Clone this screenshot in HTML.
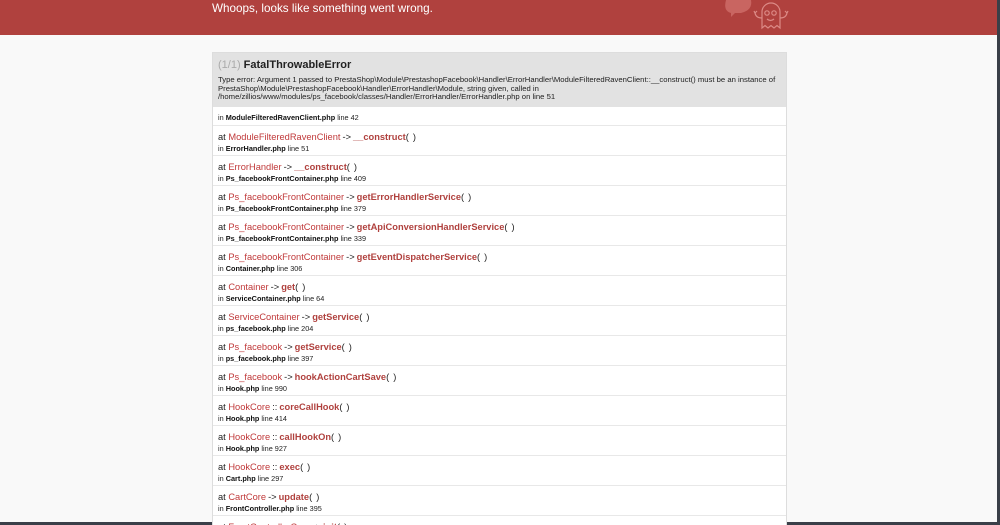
<!DOCTYPE html>
<html><head><meta charset="utf-8"><style>
*{margin:0;padding:0;box-sizing:border-box}
html,body{width:1000px;height:525px;overflow:hidden;background:#f9f9f9;font-family:"Liberation Sans",Arial,sans-serif;color:#222;position:relative}
.hd{position:absolute;left:0;top:0;width:997px;height:35px;background:#b0413e}
.hd h1{position:absolute;left:212px;top:2px;font-size:11.7px;font-weight:normal;color:#fff}
.rb{position:absolute;right:0;top:0;width:3px;height:525px;background:#3a3f48}
.bb{position:absolute;left:0;bottom:0;width:1000px;height:3px;background:#3a3f48}
.box{position:absolute;left:212px;top:52px;width:575px;border:1px solid #ddd;background:#fff}
.gh{background:#e2e2e2;height:54px;padding:6px 5px}
.gh .t{font-size:11px;font-weight:bold;color:#222}
.gh .t span{color:#aaa;font-weight:normal}
.gh p{font-size:7.7px;line-height:8.6px;margin-top:5px;color:#222}
.r0{height:19px;border-bottom:1px solid #e8e8e8;font-size:7.3px;padding:6px 5px}
.r{height:30px;border-bottom:1px solid #e8e8e8;padding:5px 5px 0}
.r .a{font-size:9.3px;line-height:12px;color:#222}
.r .a .c{color:#c0393a}
.r .a b{color:#b0413e}
.r .a s{text-decoration:none;margin:0 2px}
.r .i{font-size:7.3px;margin-top:1px}
b.f{color:#111}
</style></head><body>
<div class="hd"><h1>Whoops, looks like something went wrong.</h1>
<svg style="position:absolute;left:720px;top:0" width="80" height="35" viewBox="0 0 80 35" fill="none" stroke="#dc8a86" stroke-width="1.2">
<path d="M6 0 h25 q2 10 -10 13 l-6 0 l-4 4 l0 -4 q-8 -2 -5 -13z" fill="#c96561" stroke="none"/>
<path d="M42 28 V12 a9 9 0 0 1 18 0 V28 l-3-2.5 -3 2.5 -3-2.5 -3 2.5 -3-2.5 z"/>
<circle cx="47" cy="13" r="2.2"/><circle cx="54" cy="13" r="2.2"/>
<path d="M47 19 q3.5 3 7 0"/>
<path d="M42 18 q-6 0 -7-5 m0 0 l-1-2 m1 2 l2-2"/>
<path d="M60 18 q6 0 7-5 m0 0 l1-2 m-1 2 l-2-2"/>
</svg></div>
<div class="rb"></div><div class="bb"></div>
<div class="box">
<div class="gh"><div class="t"><span>(1/1)</span> FatalThrowableError</div>
<p>Type error: Argument 1 passed to PrestaShop\Module\PrestashopFacebook\Handler\ErrorHandler\ModuleFilteredRavenClient::__construct() must be an instance of PrestaShop\Module\PrestashopFacebook\Handler\ErrorHandler\Module, string given, called in /home/zillios/www/modules/ps_facebook/classes/Handler/ErrorHandler/ErrorHandler.php on line 51</p></div>
<div class="r0">in <b class="f">ModuleFilteredRavenClient.php</b> line 42</div>
<div class="r"><div class="a">at <span class="c">ModuleFilteredRavenClient</span><s>-&gt;</s><b>__construct</b>(<s></s>)</div><div class="i">in <b class="f">ErrorHandler.php</b> line 51</div></div>
<div class="r"><div class="a">at <span class="c">ErrorHandler</span><s>-&gt;</s><b>__construct</b>(<s></s>)</div><div class="i">in <b class="f">Ps_facebookFrontContainer.php</b> line 409</div></div>
<div class="r"><div class="a">at <span class="c">Ps_facebookFrontContainer</span><s>-&gt;</s><b>getErrorHandlerService</b>(<s></s>)</div><div class="i">in <b class="f">Ps_facebookFrontContainer.php</b> line 379</div></div>
<div class="r"><div class="a">at <span class="c">Ps_facebookFrontContainer</span><s>-&gt;</s><b>getApiConversionHandlerService</b>(<s></s>)</div><div class="i">in <b class="f">Ps_facebookFrontContainer.php</b> line 339</div></div>
<div class="r"><div class="a">at <span class="c">Ps_facebookFrontContainer</span><s>-&gt;</s><b>getEventDispatcherService</b>(<s></s>)</div><div class="i">in <b class="f">Container.php</b> line 306</div></div>
<div class="r"><div class="a">at <span class="c">Container</span><s>-&gt;</s><b>get</b>(<s></s>)</div><div class="i">in <b class="f">ServiceContainer.php</b> line 64</div></div>
<div class="r"><div class="a">at <span class="c">ServiceContainer</span><s>-&gt;</s><b>getService</b>(<s></s>)</div><div class="i">in <b class="f">ps_facebook.php</b> line 204</div></div>
<div class="r"><div class="a">at <span class="c">Ps_facebook</span><s>-&gt;</s><b>getService</b>(<s></s>)</div><div class="i">in <b class="f">ps_facebook.php</b> line 397</div></div>
<div class="r"><div class="a">at <span class="c">Ps_facebook</span><s>-&gt;</s><b>hookActionCartSave</b>(<s></s>)</div><div class="i">in <b class="f">Hook.php</b> line 990</div></div>
<div class="r"><div class="a">at <span class="c">HookCore</span><s>::</s><b>coreCallHook</b>(<s></s>)</div><div class="i">in <b class="f">Hook.php</b> line 414</div></div>
<div class="r"><div class="a">at <span class="c">HookCore</span><s>::</s><b>callHookOn</b>(<s></s>)</div><div class="i">in <b class="f">Hook.php</b> line 927</div></div>
<div class="r"><div class="a">at <span class="c">HookCore</span><s>::</s><b>exec</b>(<s></s>)</div><div class="i">in <b class="f">Cart.php</b> line 297</div></div>
<div class="r"><div class="a">at <span class="c">CartCore</span><s>-&gt;</s><b>update</b>(<s></s>)</div><div class="i">in <b class="f">FrontController.php</b> line 395</div></div>
<div class="r"><div class="a">at <span class="c">FrontControllerCore</span><s>-&gt;</s><b>init</b>(<s></s>)</div><div class="i">in <b class="f">Controller.php</b> line 1</div></div>
</div>
</body></html>
